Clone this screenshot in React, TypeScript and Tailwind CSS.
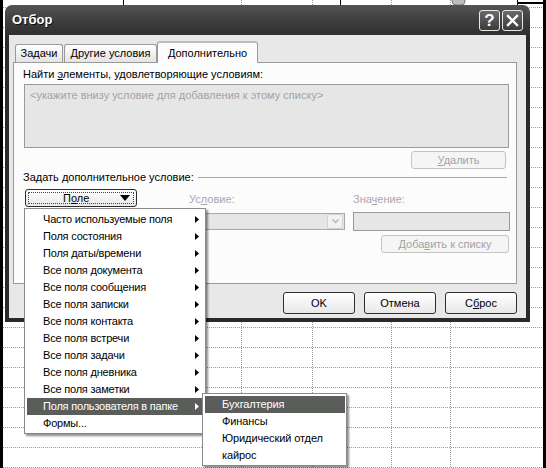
import React from 'react';

const mainItems = [
  'Часто используемые поля',
  'Поля состояния',
  'Поля даты/времени',
  'Все поля документа',
  'Все поля сообщения',
  'Все поля записки',
  'Все поля контакта',
  'Все поля встречи',
  'Все поля задачи',
  'Все поля дневника',
  'Все поля заметки',
  'Поля пользователя в папке',
  'Формы...',
];

const folderItems = ['Бухгалтерия', 'Финансы', 'Юридический отдел', 'кайрос'];

function Backdrop() {
  const rows = Array.from({ length: 24 }, (_, i) => 7 + i * 20);
  const cols = [241, 312, 391, 450];
  return (
    <svg className="absolute inset-0" width={546} height={468}>
      <rect width={546} height={468} fill="#fff" />
      {rows.map((y) => (
        <line key={y} x1={3} x2={543} y1={y + 0.5} y2={y + 0.5} stroke="#9c9c9c" strokeDasharray="1 1" />
      ))}
      {cols.map((x) => (
        <line key={x} x1={x + 0.5} x2={x + 0.5} y1={0} y2={468} stroke="#9c9c9c" strokeDasharray="1 1" />
      ))}
      <line x1={123.5} x2={123.5} y1={0} y2={5} stroke="#000" />
      <line x1={340.5} x2={340.5} y1={0} y2={5} stroke="#000" />
      <rect x={452} y={-4} width={13} height={9} rx={4} fill="#bdbdbd" stroke="#777" />
      <line x1={517.5} x2={517.5} y1={0} y2={5} stroke="#000" />
      <rect x={517} y={2} width={29} height={2} fill="#000" />
      <rect x={0} y={0} width={3} height={468} fill="#000" />
      <rect x={543} y={0} width={3} height={468} fill="#000" />
    </svg>
  );
}

function RightArrow({ color }: { color: string }) {
  return (
    <svg width={4} height={7} viewBox="0 0 4 7">
      <polygon points="0,0 4,3.5 0,7" fill={color} />
    </svg>
  );
}

function XpButton({ label, width, disabled }: { label: React.ReactNode; width: string; disabled?: boolean }) {
  return (
    <div
      className={
        disabled
          ? `flex ${width} h-[18px] items-center justify-center rounded-[3px] border border-[#c4c4c4] bg-[#f5f5f5] text-[11px] text-[#a3a3a3]`
          : `flex ${width} h-[22px] items-center justify-center rounded-[3px] border border-[#2e2e2e] bg-gradient-to-b from-white to-[#e8e8e8] text-[11px] text-black`
      }
    >
      {label}
    </div>
  );
}

function Dialog() {
  return (
    <div className="absolute left-[5px] top-[5px] flex h-[317px] w-[525px] flex-col">
      {/* Title bar */}
      <div className="flex h-[30px] items-center rounded-t-[7px] bg-gradient-to-b from-[#555555] via-[#3f3f3f] to-[#2f2f2f] pl-[7px] pr-[7px]">
        <span className="text-[13px] font-bold text-white [text-shadow:1px_1px_0_#111]">Отбор</span>
        <div className="ml-auto flex gap-[2px]">
          <div className="flex h-[21px] w-[21px] items-center justify-center rounded-[3px] border border-[#e8e8e8] bg-gradient-to-b from-[#6a6a6a] to-[#3c3c3c] text-[17px] font-bold leading-none text-white">
            ?
          </div>
          <div className="flex h-[21px] w-[21px] items-center justify-center rounded-[3px] border border-[#e8e8e8] bg-gradient-to-b from-[#6a6a6a] to-[#3c3c3c]">
            <svg width={13} height={13} viewBox="0 0 13 13">
              <path d="M2 2 L11 11 M11 2 L2 11" stroke="#fff" strokeWidth={2.4} strokeLinecap="square" />
            </svg>
          </div>
        </div>
      </div>

      {/* Body */}
      <div className="flex flex-1 flex-col border-x-[4px] border-b-[4px] border-[#2a2a2a] bg-[#e8e8e8] pl-[4px] pr-[9px] pt-[6px]">
        {/* Tabs */}
        <div className="relative z-10 flex h-[21px] items-end pl-[2px] text-[11px]">
          <div className="flex h-[18px] w-[48px] items-center justify-center rounded-t-[3px] border border-b-0 border-[#9a9a9a] bg-gradient-to-b from-white to-[#e4e4e4]">
            Задачи
          </div>
          <div className="ml-[1px] flex h-[18px] w-[93px] items-center justify-center rounded-t-[3px] border border-b-0 border-[#9a9a9a] bg-gradient-to-b from-white to-[#e4e4e4]">
            Другие условия
          </div>
          <div className="-mb-px flex h-[22px] w-[101px] items-start justify-center rounded-t-[3px] border border-b-0 border-t-2 border-[#9a9a9a] border-t-[#bdbdbd] bg-[#fcfcfd] pt-[2px]">
            Дополнительно
          </div>
        </div>

        {/* Panel */}
        <div className="flex h-[222px] flex-col border border-[#9a9a9a] bg-[#fcfcfd] text-[11px]">
          <div className="ml-[9px] mt-[4px] h-[14px] leading-[14px]">
            Найти <u>э</u>лементы, удовлетворяющие условиям:
          </div>
          <div className="ml-[10px] mt-[3px] h-[64px] w-[485px] border border-[#9a9a9a] bg-[#e6e6e6] pl-[5px] pt-[3px] leading-[14px] text-[#a3a3a3]">
            &lt;укажите внизу условие для добавления к этому списку&gt;
          </div>
          <div className="mr-[10px] mt-[3px] self-end">
            <XpButton width="w-[95px]" disabled label={<span><u>У</u>далить</span>} />
          </div>
          <div className="ml-[9px] mr-[9px] mt-[1px] flex h-[14px] items-center gap-[4px]">
            <span className="leading-[14px]">Задать дополнительное условие:</span>
            <div className="h-px flex-1 bg-[#a8a8a8]" />
          </div>

          <div className="ml-[11px] mt-[5px] flex">
            <div className="flex h-[18px] w-[112px] items-center rounded-[3px] border border-[#2e2e2e] bg-gradient-to-b from-white to-[#e8e8e8] p-[2px]">
              <div className="flex h-full w-full items-center border border-dotted border-[#444]">
                <span className="ml-[34px] w-[28px]">
                  П<u>о</u>ле
                </span>
                <svg className="ml-auto mr-[3px]" width={10} height={6} viewBox="0 0 10 6">
                  <polygon points="0,0 10,0 5,6" fill="#000" />
                </svg>
              </div>
            </div>

            <div className="ml-[52px] flex w-[156px] flex-col">
              <span className="mt-[3px] h-[14px] leading-[14px] text-[#a8a8a8]">
                Ус<u>л</u>овие:
              </span>
              <div className="mt-[7px] flex h-[17px] items-center border border-[#a8a8a8] bg-[#e6e6e6] pr-[1px]">
                <div className="ml-auto flex h-[15px] w-[16px] items-center justify-center rounded-[2px] border border-[#d2d2d2] bg-[#f2f2f2]">
                  <svg width={7} height={5} viewBox="0 0 7 5">
                    <path d="M0.5 0.5 L3.5 3.5 L6.5 0.5" stroke="#b4b4b4" strokeWidth={1.3} fill="none" />
                  </svg>
                </div>
              </div>
            </div>

            <div className="ml-[8px] flex w-[157px] flex-col">
              <span className="mt-[3px] h-[14px] leading-[14px] text-[#a8a8a8]">
                Зна<u>ч</u>ение:
              </span>
              <div className="mt-[6px] h-[19px] border border-[#9a9a9a] bg-[#e6e6e6]" />
            </div>
          </div>

          <div className="mr-[7px] mt-[4px] self-end">
            <XpButton width="w-[128px]" disabled label={<span>Доба<u>в</u>ить к списку</span>} />
          </div>
        </div>

        {/* Dialog buttons */}
        <div className="mt-[8px] flex justify-end gap-[9px]">
          <XpButton width="w-[72px]" label="OK" />
          <XpButton width="w-[72px]" label="Отмена" />
          <XpButton width="w-[72px]" label={<span>С<u>б</u>рос</span>} />
        </div>
      </div>
    </div>
  );
}

function FieldMenu() {
  return (
    <div className="absolute left-[24px] top-[208px] w-[182px] border border-[#8a8a8a] bg-white pb-[1px] pl-[2px] pr-[3px] pt-[2px] text-[11px] tracking-[-0.2px] shadow-[2px_2px_2px_rgba(0,0,0,0.45)]">
      {mainItems.map((item, i) => {
        const active = i === 11;
        const hasArrow = i !== 12;
        return (
          <div
            key={item}
            className={
              active
                ? 'flex h-[17px] items-center bg-[#5b5d5b] pl-[16px] pr-[3px] text-white'
                : 'flex h-[17px] items-center pl-[16px] pr-[3px] text-black'
            }
          >
            <span>{item}</span>
            {hasArrow && (
              <span className="ml-auto flex">
                <RightArrow color={active ? '#fff' : '#000'} />
              </span>
            )}
          </div>
        );
      })}
    </div>
  );
}

function FolderMenu() {
  return (
    <div className="absolute left-[202px] top-[393px] w-[145px] border border-[#8a8a8a] bg-white pb-[1px] pl-[2px] pr-[1px] pt-[2px] text-[11px] tracking-[-0.1px] shadow-[2px_2px_2px_rgba(0,0,0,0.45)]">
      {folderItems.map((item, i) => (
        <div
          key={item}
          className={
            i === 0
              ? 'flex h-[17px] items-center bg-[#5b5d5b] pl-[17px] text-white'
              : 'flex h-[17px] items-center pl-[17px] text-black'
          }
        >
          {item}
        </div>
      ))}
    </div>
  );
}

export default function App() {
  return (
    <div className="relative h-[468px] w-[546px] overflow-hidden bg-white font-['Liberation_Sans',Arial,sans-serif] text-black">
      <Backdrop />
      <Dialog />
      <FieldMenu />
      <FolderMenu />
    </div>
  );
}
